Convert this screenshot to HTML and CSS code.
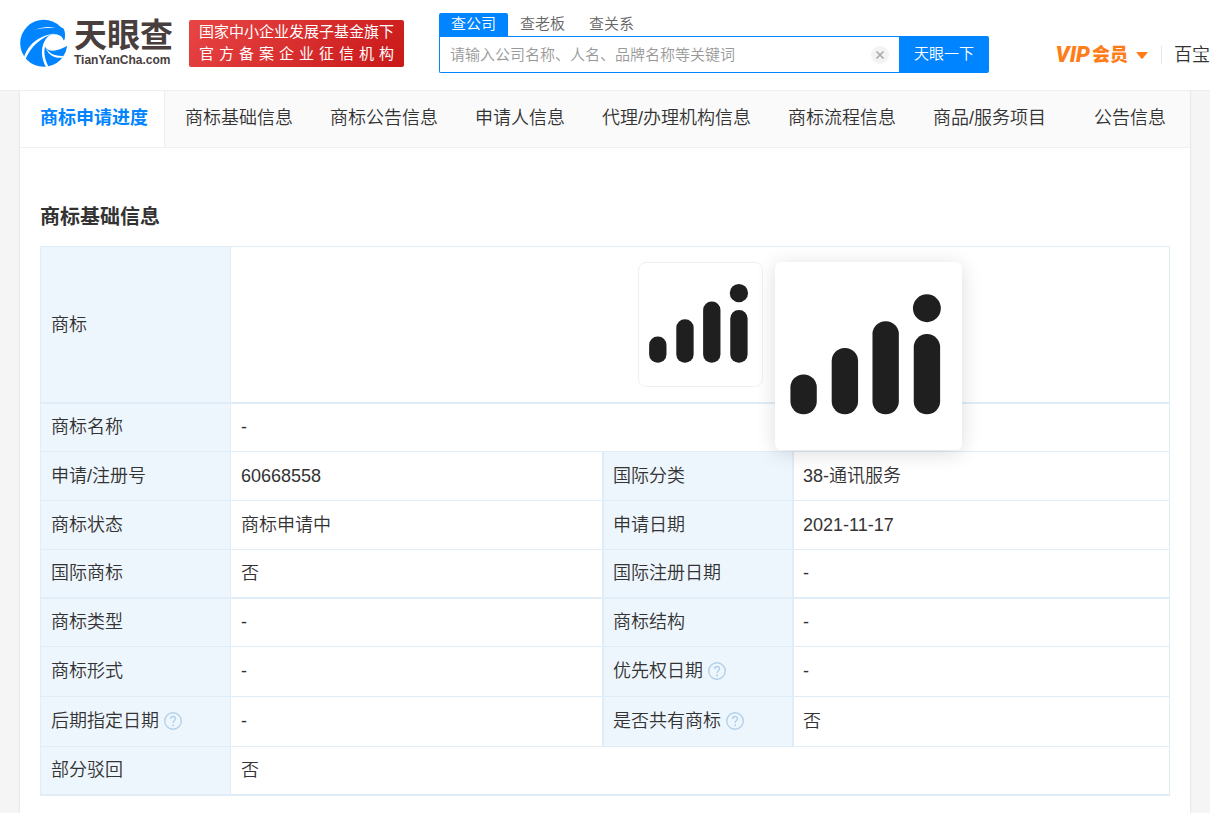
FILE: index.html
```html
<!DOCTYPE html>
<html lang="zh-CN">
<head>
<meta charset="utf-8">
<title>商标基础信息 - 天眼查</title>
<link rel="stylesheet" href="styles.css">
</head>
<body>
<svg class="defs" aria-hidden="true">
  <symbol id="mark" viewBox="0 0 188 188">
    <rect x="15.5" y="112.5" width="26.5" height="40" rx="13"/>
    <rect x="57" y="86" width="26.5" height="66.500" rx="13"/>
    <rect x="98" y="59" width="26.500" height="93.500" rx="13"/>
    <rect x="139.500" y="72" width="26.500" height="80.500" rx="13"/>
    <circle cx="152.700" cy="46" r="14"/>
  </symbol>
  <symbol id="help" viewBox="0 0 18 18">
    <circle cx="9" cy="9" r="8.300" fill="none" stroke="#b3d0ea" stroke-width="1.400"/>
    <path d="M6.600 7.100C6.600 3.600 11.700 3.800 11.500 6.900C11.400 8.500 9.100 8.700 9.100 11" fill="none" stroke="#b3d0ea" stroke-width="1.400"/>
    <circle cx="9.100" cy="13.200" r="1" fill="#b3d0ea"/>
  </symbol>
</svg>

<header class="header">
  <a class="logo" href="#">
    <svg class="logo-icon" viewBox="0 0 48 48" aria-hidden="true">
      <circle cx="23.700" cy="24.300" r="23.500" fill="#0084ff"/>
      <path d="M32 15.500C26 18 23 23 25 27.500C27 31.500 32 32.500 37 31C41 30 45 28.500 48 26V9L42 8.500C44.500 12 45.500 16 44 21.500C42.500 17 38 14.500 32 15.500Z" fill="#fff"/>
      <path d="M16 9.200C25 4.500 36 4.500 43.500 9.500C45.500 13 45.500 17.500 44 21.500L38 10C31 7 24 7.300 16 9.200Z" fill="#0084ff"/>
      <path d="M15 10.800C22 8 30 7.300 36 9C29 8.500 22 9.200 15 10.800Z" fill="#fff"/>
      <path d="M4 38.500C7.500 27 17 16.500 35 14.500C20 18.500 11.500 27 5.500 40Z" fill="#fff"/>
      <path d="M32 15.500C22 20 18.500 34 26 48L28.500 47.500C22.500 36 22.500 24 33 17Z" fill="#fff"/>
      <path d="M24.800 26C27 33.500 34 37.500 43.500 37L42 38.800C33 39.500 26.500 34.500 24.800 26Z" fill="#fff"/>
    </svg>
    <span class="logo-words">
      <span class="logo-name">天眼查</span>
      <span class="logo-domain">TianYanCha.com</span>
    </span>
  </a>
  <p class="badge">
    <span>国家中小企业发展子基金旗下</span>
    <span>官方备案企业征信机构</span>
  </p>
  <form class="search">
    <div class="search-tabs">
      <button type="button" class="search-tab active">查公司</button>
      <button type="button" class="search-tab">查老板</button>
      <button type="button" class="search-tab">查关系</button>
    </div>
    <div class="search-row">
      <div class="search-box">
        <input class="search-input" type="text" aria-label="搜索" placeholder="请输入公司名称、人名、品牌名称等关键词">
        <button type="button" class="clear" aria-label="清除">
          <svg viewBox="0 0 18 18"><circle cx="9" cy="9" r="9" fill="#f3f3f3"/><path d="M5.500 5.500L12.500 12.500M12.500 5.500L5.500 12.500" stroke="#a5a5a5" stroke-width="1.500"/></svg>
        </button>
      </div>
      <button type="button" class="search-go">天眼一下</button>
    </div>
  </form>
  <div class="account">
    <a class="vip" href="#"><span class="vip-en">VIP</span><span>会员</span>
      <svg class="caret" viewBox="0 0 12 7" aria-hidden="true"><path d="M1 0H11Q12 0 11.400 .8L6.700 6.500Q6 7.200 5.300 6.500L.6 .8Q0 0 1 0Z"/></svg>
    </a>
    <a class="tools" href="#">百宝</a>
  </div>
</header>

<main class="panel">
  <nav class="nav">
    <a class="nav-item current" href="#">商标申请进度</a>
    <a class="nav-item" href="#">商标基础信息</a>
    <a class="nav-item" href="#">商标公告信息</a>
    <a class="nav-item" href="#">申请人信息</a>
    <a class="nav-item" href="#">代理/办理机构信息</a>
    <a class="nav-item" href="#">商标流程信息</a>
    <a class="nav-item" href="#">商品/服务项目</a>
    <a class="nav-item last" href="#">公告信息</a>
  </nav>
  <section class="section">
    <h2 class="title">商标基础信息</h2>
    <table class="info">
      <colgroup><col class="col-label"><col class="col-value"><col class="col-label"><col></colgroup>
      <tbody>
        <tr class="thick">
          <th scope="row">商标</th>
          <td class="image-cell" colspan="3">
            <div class="thumb">
              <svg class="thumb-mark" role="img" aria-label="商标图样"><use href="#mark"/></svg>
              <div class="preview"><svg class="preview-mark" aria-hidden="true"><use href="#mark"/></svg></div>
            </div>
          </td>
        </tr>
        <tr class="short"><th scope="row">商标名称</th><td colspan="3">-</td></tr>
        <tr><th scope="row">申请/注册号</th><td>60668558</td><th scope="row" class="second">国际分类</th><td>38-通讯服务</td></tr>
        <tr><th scope="row">商标状态</th><td>商标申请中</td><th scope="row" class="second">申请日期</th><td>2021-11-17</td></tr>
        <tr class="thick"><th scope="row">国际商标</th><td>否</td><th scope="row" class="second">国际注册日期</th><td>-</td></tr>
        <tr class="short"><th scope="row">商标类型</th><td>-</td><th scope="row" class="second">商标结构</th><td>-</td></tr>
        <tr class="tall"><th scope="row">商标形式</th><td>-</td><th scope="row" class="second"><span class="label">优先权日期<svg class="help" aria-hidden="true"><use href="#help"/></svg></span></th><td>-</td></tr>
        <tr class="tall"><th scope="row"><span class="label">后期指定日期<svg class="help" aria-hidden="true"><use href="#help"/></svg></span></th><td>-</td><th scope="row" class="second"><span class="label">是否共有商标<svg class="help" aria-hidden="true"><use href="#help"/></svg></span></th><td>否</td></tr>
        <tr class="thick"><th scope="row">部分驳回</th><td colspan="3">否</td></tr>
      </tbody>
    </table>
  </section>
</main>
</body>
</html>
```
FILE: styles.css
```css
* { box-sizing: border-box; }

body {
  margin: 0;
  min-height: 100vh;
  display: flex;
  flex-direction: column;
  background: #f5f5f5;
  color: #333;
  font: 350 18px/24px "Liberation Sans", "Noto Sans CJK SC", sans-serif;
}

a { color: inherit; text-decoration: none; }
button, input { font: inherit; border: 0; padding: 0; margin: 0; }
button { cursor: pointer; }
.defs { position: absolute; width: 0; height: 0; }

.header {
  display: flex;
  height: 91px;
  padding-left: 20px;
  background: #fff;
  border-bottom: 1px solid #eee;
  white-space: nowrap;
}

.logo { display: flex; gap: 6px; margin-top: 19px; height: 48px; color: #483e3d; }
.logo-icon { width: 48px; height: 48px; }
.logo-words { display: flex; flex-direction: column; width: 100px; font-weight: 700; }
.logo-name { font-size: 33px; line-height: 34px; }
.logo-domain { font-size: 12px; line-height: 14px; }

.badge {
  display: flex;
  flex-direction: column;
  width: 215px;
  height: 47px;
  margin: 20px 0 0 15px;
  padding: 1px 10px;
  border-radius: 2px;
  background: linear-gradient(135deg, #e84545, #c91818);
  color: #fff;
  font-size: 15px;
  font-weight: 400;
  line-height: 22px;
}
.badge span { text-align-last: justify; }

.search { display: flex; flex-direction: column; flex: 0 1 550px; margin: 13px 0 0 35px; font-size: 15px; }
.search-tabs { display: flex; }
.search-tab { width: 69px; height: 23px; line-height: 20px; padding-bottom: 2px; background: none; color: #666; }
.search-tab.active { background: #0084ff; color: #fff; border-radius: 2px 2px 0 0; }
.search-row { display: flex; height: 37px; }
.search-box {
  display: flex;
  flex: 1;
  align-items: center;
  padding: 0 10px;
  border: 1px solid #0084ff;
  border-right: 0;
  border-radius: 0 0 0 2px;
}
.search-input { flex: 1; min-width: 0; height: 32px; background: none; outline: 0; }
.search-input::placeholder { color: #999; }
.clear { width: 18px; height: 18px; background: none; }
.clear svg { display: block; }
.search-go { width: 90px; padding-bottom: 2px; background: #0084ff; color: #fff; border-radius: 0 2px 2px 0; }

.account { display: flex; align-items: center; height: 24px; margin: 43px 0 0 auto; }
.vip { display: flex; align-items: center; color: #ff7d18; font-weight: 900; }
.vip-en { margin-right: 2px; font: italic 900 22px/24px Roboto, sans-serif; }
.caret { width: 12px; height: 7px; margin-left: 8px; fill: #ff7d18; }
.tools { margin-left: 13px; padding-left: 12px; line-height: 18px; border-left: 1px solid #e5e5e5; }

.panel { flex: 1; margin: 0 20px; background: #fff; box-shadow: 0 0 2px rgba(0, 0, 0, .15); clip-path: inset(0 -4px); }
.nav { display: flex; height: 57px; background: #fafafa; border-bottom: 1px solid #f0f0f0; white-space: nowrap; }
.nav-item { padding: 0 17px 0 20px; line-height: 54px; }
.nav-item.current { background: #fff; box-shadow: inset -1px 0 #eee; color: #0084ff; font-weight: 700; }
.nav-item.last { margin-left: auto; padding-right: 24px; }

.section { padding: 57px 20px 17px; }
.title { margin: 0 0 17px; font-size: 20px; line-height: 24px; font-weight: 700; }

.info { width: 100%; table-layout: fixed; border-collapse: collapse; }
.col-label { width: 190px; }
.col-value { width: 33%; }
.info th, .info td {
  height: 49px;
  padding: 0 10px;
  border: 1px solid #e0edf7;
  text-align: left;
  font-weight: inherit;
}
.info th { background: #eef6fd; }
.info th.second { padding-left: 9px; border-left-width: 2px; border-right-width: 2px; }
.info th.second + td { padding-left: 9px; }
.info .thick > * { border-bottom-width: 2px; }
.info .short > * { height: 48px; }
.info .tall > * { height: 50px; }
.info .image-cell { padding: 15px 10px; }

.label { display: flex; align-items: center; gap: 5px; }
.help { width: 18px; height: 18px; }

.thumb {
  position: relative;
  width: 125px;
  height: 125px;
  margin: 0 auto;
  border: 1px solid #f0f0f0;
  border-radius: 8px;
  fill: #1f1f1f;
}
.thumb-mark { display: block; width: 100%; height: 100%; }
.preview {
  position: absolute;
  top: -1px;
  left: calc(100% + 13px);
  width: 187px;
  height: 188px;
  background: #fff;
  border-radius: 6px;
  box-shadow: 0 3px 20px rgba(0, 0, 0, .14);
}
.preview-mark { display: block; width: 100%; height: 100%; }
```
